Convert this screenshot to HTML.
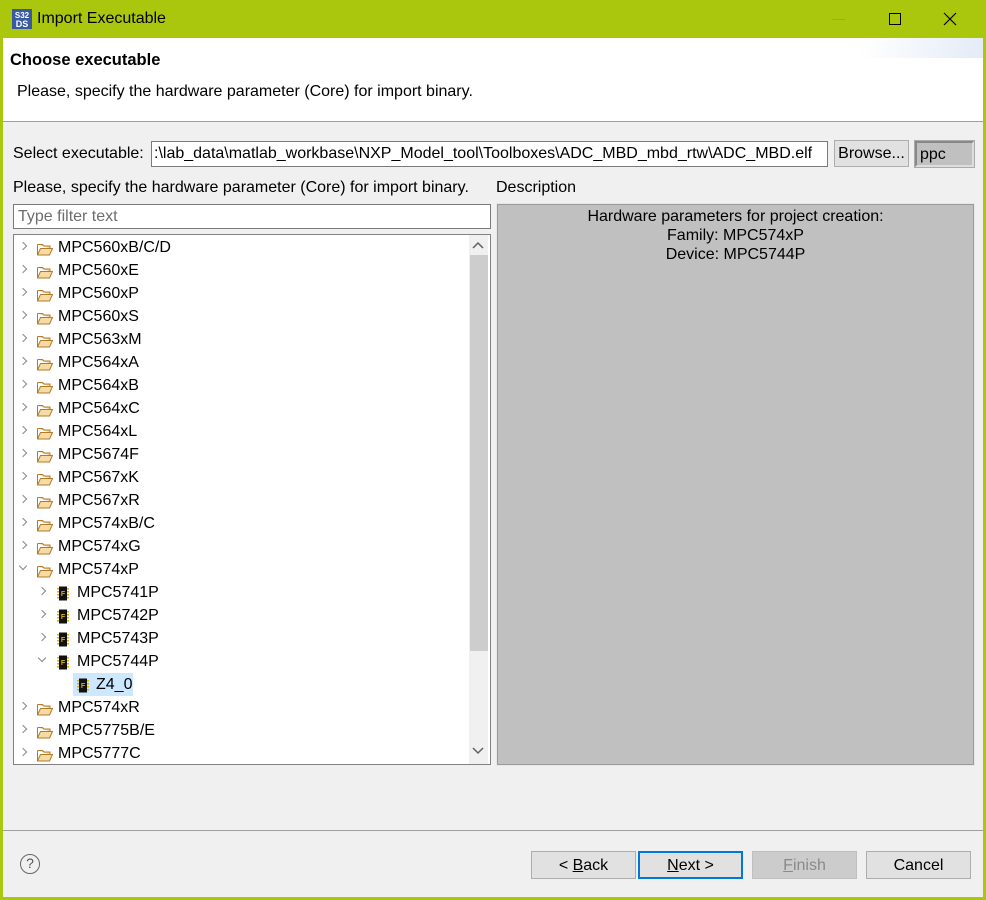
<!DOCTYPE html>
<html><head><meta charset="utf-8"><style>
*{margin:0;padding:0;box-sizing:border-box}
body{width:986px;height:900px;position:relative;background:#f0f0f0;font-family:"Liberation Sans",sans-serif;font-size:16px;color:#000;overflow:hidden}
.a{position:absolute;white-space:nowrap}
.btn{position:absolute;top:851px;height:28px;width:105px;background:#e1e1e1;border:1px solid #adadad;text-align:center;line-height:27px}
.row{position:absolute;height:23px;line-height:24px;white-space:nowrap}
.chev{position:absolute;top:7px;width:6px;height:6px;border-right:1.3px solid #888;border-bottom:1.3px solid #888;transform:rotate(-45deg)}
.chev.d{transform:rotate(45deg);top:5px}
</style></head><body>
<div class="a" style="left:0;top:0;width:986px;height:38px;background:#abc70d"></div>
<div class="a" style="left:0;top:0;width:3px;height:900px;background:#abc70d"></div>
<div class="a" style="left:983px;top:0;width:3px;height:900px;background:#abc70d"></div>
<div class="a" style="left:0;top:897px;width:986px;height:3px;background:#abc70d"></div>
<svg class="a" style="left:12px;top:9px" width="20" height="20"><rect width="20" height="20" fill="#3a5aa0"/><text x="10" y="9" font-size="8" fill="#fff" text-anchor="middle" font-family="Liberation Sans" font-weight="bold">S32</text><text x="10" y="18" font-size="9" fill="#fff" text-anchor="middle" font-family="Liberation Sans" font-weight="bold">DS</text></svg>
<div class="a" style="left:37px;top:10px;font-size:16px">Import Executable</div>
<div class="a" style="left:832px;top:19px;width:13px;height:1px;background:#9aaa40"></div>
<div class="a" style="left:889px;top:13px;width:12px;height:12px;border:1px solid #000"></div>
<svg class="a" style="left:943px;top:12px" width="14" height="14"><path d="M1 1L13 13M13 1L1 13" stroke="#000" stroke-width="1.2"/></svg>
<div class="a" style="left:3px;top:38px;width:980px;height:83px;background:#fff"></div>
<div class="a" style="left:780px;top:38px;width:203px;height:20px;background:linear-gradient(100deg,#fff 40%,#e4ebf7 100%)"></div>
<div class="a" style="left:3px;top:121px;width:980px;height:1px;background:#a0a0a0"></div>
<div class="a" style="left:10px;top:51px;font-weight:bold;font-size:16.5px">Choose executable</div>
<div class="a" style="left:17px;top:83px">Please, specify the hardware parameter (Core) for import binary.</div>
<div class="a" style="left:13px;top:145px">Select executable:</div>
<div class="a" style="left:151px;top:141px;width:677px;height:26px;background:#fff;border:1px solid #7a7a7a;padding-left:2px;line-height:24px;overflow:hidden">:\lab_data\matlab_workbase\NXP_Model_tool\Toolboxes\ADC_MBD_mbd_rtw\ADC_MBD.elf</div>
<div class="a" style="left:834px;top:140px;width:75px;height:27px;background:#e1e1e1;border:1px solid #adadad;text-align:center;line-height:26px">Browse...</div>
<div class="a" style="left:915px;top:141px;width:59px;height:26px;background:#c0c0c0;border:2px solid #888;border-color:#888 #ddd #ddd #888;padding-left:3px;line-height:23px;outline:1px solid #ababab">ppc</div>
<div class="a" style="left:13px;top:179px">Please, specify the hardware parameter (Core) for import binary.</div>
<div class="a" style="left:496px;top:179px">Description</div>
<div class="a" style="left:13px;top:204px;width:478px;height:25px;background:#fff;border:1px solid #7a7a7a;color:#6d6d6d;padding-left:4px;line-height:23px">Type filter text</div>
<div class="a" style="left:13px;top:234px;width:478px;height:531px;background:#fff;border:1px solid #828282;overflow:hidden">
<div class="a" style="left:455px;top:0;width:19px;height:529px;background:#f0f0f0"></div>
<div class="a" style="left:456px;top:20px;width:18px;height:396px;background:#cdcdcd"></div>
<svg class="a" style="left:458px;top:6px" width="12" height="8"><path d="M1 7L6 2L11 7" stroke="#606060" stroke-width="1.5" fill="none"/></svg>
<svg class="a" style="left:458px;top:512px" width="12" height="8"><path d="M1 1L6 6L11 1" stroke="#606060" stroke-width="1.5" fill="none"/></svg>
</div>
<div id="tree"></div>
<div class="a" style="left:497px;top:204px;width:477px;height:561px;background:#c0c0c0;border:1px solid #9a9a9a;outline:1px solid #e8e8e8"></div>
<div class="a" style="left:497px;top:207px;width:477px;text-align:center;line-height:19px">Hardware parameters for project creation:<br>Family: MPC574xP<br>Device: MPC5744P</div>
<div class="a" style="left:3px;top:830px;width:980px;height:1px;background:#a0a0a0"></div>
<div class="a" style="left:20px;top:854px;width:20px;height:20px;border:1.5px solid #666;border-radius:50%;text-align:center;line-height:17px;color:#555;font-size:14px">?</div>
<div class="btn" style="left:531px">&lt; <u>B</u>ack</div>
<div class="btn" style="left:638px;border:2px solid #0078d7;line-height:25px"><u>N</u>ext &gt;</div>
<div class="btn" style="left:752px;background:#cccccc;border-color:#bfbfbf;color:#8a8a8a"><u>F</u>inish</div>
<div class="btn" style="left:866px">Cancel</div>
<script>
var items=[["MPC560xB/C/D",0],["MPC560xE",0],["MPC560xP",0],["MPC560xS",0],["MPC563xM",0],["MPC564xA",0],["MPC564xB",0],["MPC564xC",0],["MPC564xL",0],["MPC5674F",0],["MPC567xK",0],["MPC567xR",0],["MPC574xB/C",0],["MPC574xG",0],["MPC574xP",0,1],["MPC5741P",1],["MPC5742P",1],["MPC5743P",1],["MPC5744P",1,1],["Z4_0",2],["MPC574xR",0],["MPC5775B/E",0],["MPC5777C",0]];
var folder='<svg width="16" height="13" viewBox="0 0 16 13"><path d="M0.5 1.5h5l1.5 1.5h6v2.5" fill="#f3d08f" stroke="#b07b2c"/><path d="M0.5 1.5v10.5h12l3-6.5h-12l-3 6.5" fill="#f6dba4" stroke="#b07b2c" stroke-linejoin="round"/></svg>';
var chip='<svg width="12" height="15" viewBox="0 0 12 15"><rect x="2" y="0.5" width="8" height="14" fill="#111"/><g fill="#e0b400"><rect x="0" y="2" width="2" height="1.5"/><rect x="0" y="5" width="2" height="1.5"/><rect x="0" y="8" width="2" height="1.5"/><rect x="0" y="11" width="2" height="1.5"/><rect x="10" y="2" width="2" height="1.5"/><rect x="10" y="5" width="2" height="1.5"/><rect x="10" y="8" width="2" height="1.5"/><rect x="10" y="11" width="2" height="1.5"/></g><text x="6" y="10" font-size="7" fill="#e0b400" text-anchor="middle" font-family="Liberation Sans" font-weight="bold">F</text></svg>';
var h='';
items.forEach(function(it,i){var y=236+i*23,l=it[1];
 if(l==0){h+='<div class="row" style="left:20px;top:'+y+'px;width:440px"><span class="chev'+(it[2]?' d':'')+'" style="left:0"></span><span class="a" style="left:17px;top:4px">'+folder+'</span><span class="a" style="left:38px">'+it[0]+'</span></div>';}
 else if(l==1){h+='<div class="row" style="left:39px;top:'+y+'px;width:400px"><span class="chev'+(it[2]?' d':'')+'" style="left:0"></span><span class="a" style="left:18px;top:4px">'+chip+'</span><span class="a" style="left:38px">'+it[0]+'</span></div>';}
 else {h+='<div class="row" style="left:73px;top:'+y+'px;width:60px;background:#cce8ff"><span class="a" style="left:4px;top:4px">'+chip+'</span><span class="a" style="left:23px">'+it[0]+'</span></div>';}
});
document.getElementById('tree').innerHTML=h;
</script>
</body></html>
